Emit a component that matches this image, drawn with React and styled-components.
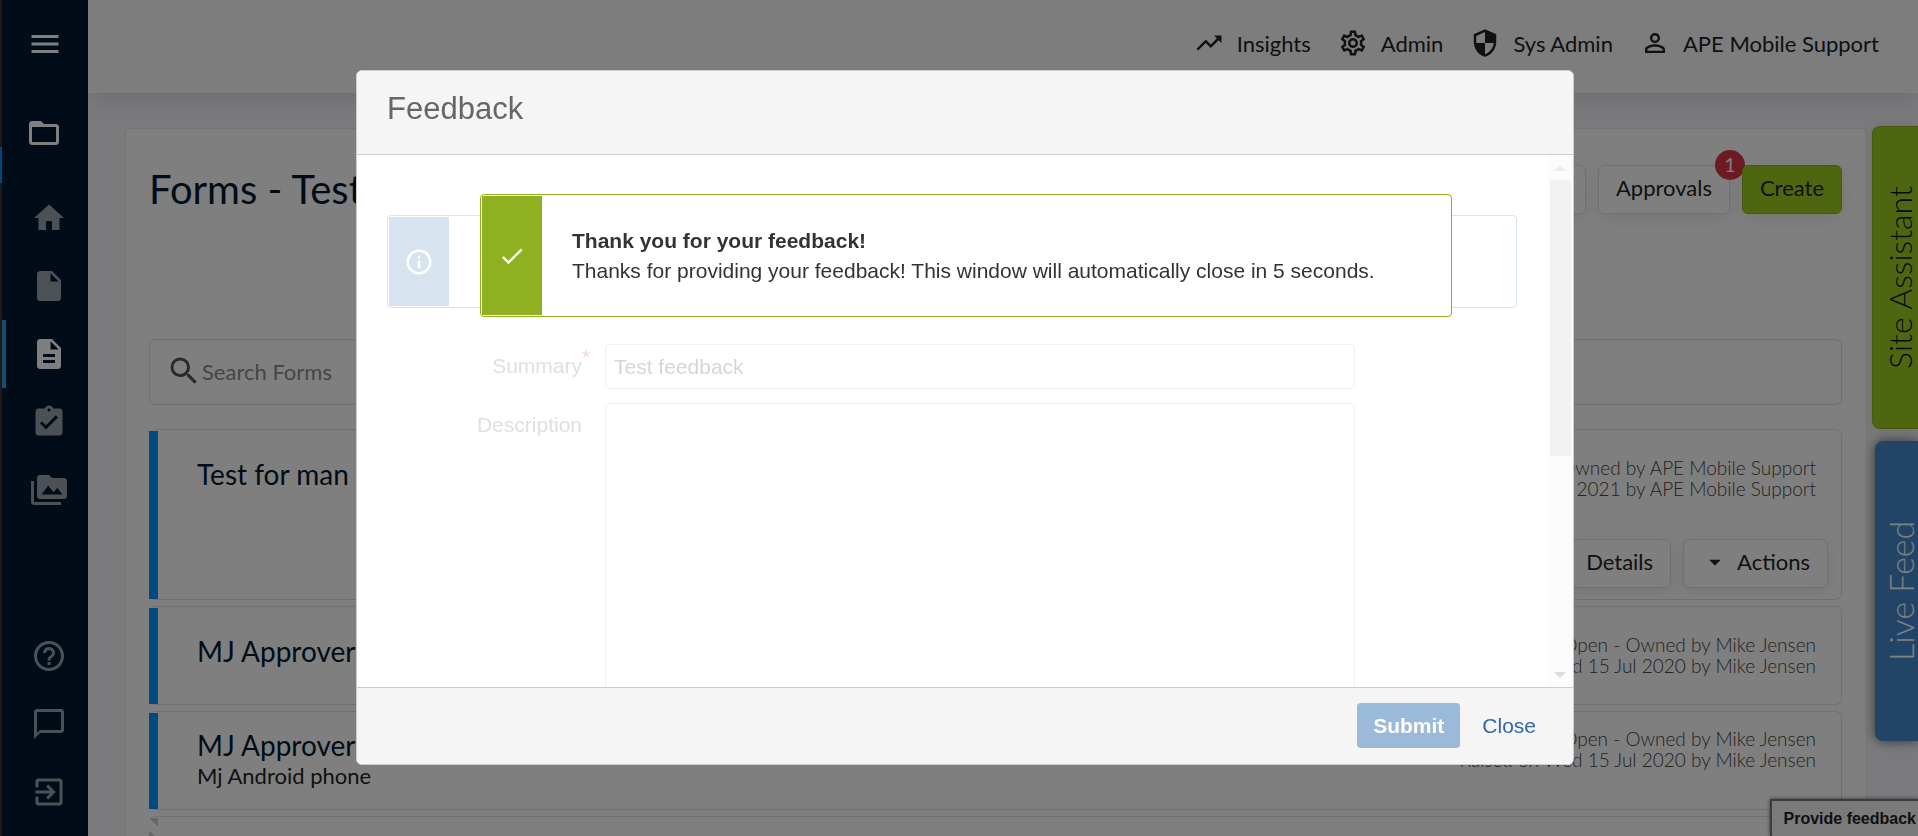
import React from 'react'
import styled, { createGlobalStyle, css } from 'styled-components'
import {
  MdMenu, MdFolderOpen, MdHome, MdInsertDriveFile, MdDescription, MdAssignmentTurnedIn,
  MdPermMedia, MdHelpOutline, MdChatBubbleOutline, MdExitToApp, MdTrendingUp,
  MdOutlineSettings, MdSecurity, MdPersonOutline, MdSearch, MdArrowDropDown,
  MdInfoOutline, MdCheck,
} from 'react-icons/md'

const headerLinks = [
  { label: 'Insights', Icon: MdTrendingUp },
  { label: 'Admin', Icon: MdOutlineSettings },
  { label: 'Sys Admin', Icon: MdSecurity },
  { label: 'APE Mobile Support', Icon: MdPersonOutline },
]

const mainNav = [
  { label: 'Home', Icon: MdHome },
  { label: 'Documents', Icon: MdInsertDriveFile },
  { label: 'Forms', Icon: MdDescription, active: true },
  { label: 'Tasks', Icon: MdAssignmentTurnedIn },
  { label: 'Media', Icon: MdPermMedia },
]

const footerNav = [
  { label: 'Help', Icon: MdHelpOutline },
  { label: 'Chat', Icon: MdChatBubbleOutline },
  { label: 'Log out', Icon: MdExitToApp },
]

const forms = [
  { title: 'Test for man', owner: 'APE Mobile Support', raised: 'Mon 3 May 2021', actions: true },
  { title: 'MJ Approver', owner: 'Mike Jensen', raised: 'Wed 15 Jul 2020' },
  { title: 'MJ Approver', subtitle: 'Mj Android phone', owner: 'Mike Jensen', raised: 'Wed 15 Jul 2020' },
]

function Sidebar() {
  return (
    <SideBar>
      <MenuButton aria-label="Menu"><MdMenu size={36} /></MenuButton>
      <ProjectButton aria-label="Projects"><MdFolderOpen size={36} /></ProjectButton>
      <NavList>
        {mainNav.map(({ label, Icon, active }) => (
          <NavLink key={label} href="#" aria-label={label} $active={active}><Icon size={36} /></NavLink>
        ))}
      </NavList>
      <NavFooter>
        {footerNav.map(({ label, Icon }) => (
          <NavLink key={label} href="#" aria-label={label}><Icon size={36} /></NavLink>
        ))}
      </NavFooter>
    </SideBar>
  )
}

function FormCard({ form }) {
  return (
    <Card $tall={form.actions}>
      <CardStripe />
      <CardContent $compact={Boolean(form.subtitle)}>
        <CardTop>
          <div>
            <CardTitle>{form.title}</CardTitle>
            {form.subtitle && <CardSubtitle>{form.subtitle}</CardSubtitle>}
          </div>
          <CardMeta>
            Open - Owned by {form.owner}<br />
            Raised on {form.raised} by {form.owner}
          </CardMeta>
        </CardTop>
        {form.actions && (
          <CardActions>
            <Button>Details</Button>
            <Button><MdArrowDropDown size={28} />Actions</Button>
          </CardActions>
        )}
      </CardContent>
    </Card>
  )
}

function FeedbackModal() {
  return (
    <Overlay>
      <Modal role="dialog" aria-labelledby="feedback-title">
        <ModalHeader>
          <ModalTitle id="feedback-title">Feedback</ModalTitle>
        </ModalHeader>
        <ModalBody>
          <ModalScroll>
            <InfoMessage>
              <MessageIcon><MdInfoOutline size={30} /></MessageIcon>
            </InfoMessage>
            <FieldRow>
              <FieldLabel htmlFor="summary">Summary<Required>*</Required></FieldLabel>
              <TextInput id="summary" defaultValue="Test feedback" />
            </FieldRow>
            <FieldRow>
              <FieldLabel htmlFor="description">Description</FieldLabel>
              <TextArea id="description" />
            </FieldRow>
          </ModalScroll>
          <ScrollBar>
            <ScrollArrow $up />
            <ScrollThumb />
            <ScrollArrow />
          </ScrollBar>
          <SuccessMessage role="status">
            <MessageIcon $success><MdCheck size={28} /></MessageIcon>
            <MessageText>
              <strong>Thank you for your feedback!</strong>
              <span>Thanks for providing your feedback! This window will automatically close in 5 seconds.</span>
            </MessageText>
          </SuccessMessage>
        </ModalBody>
        <ModalFooter>
          <SubmitButton>Submit</SubmitButton>
          <CloseButton>Close</CloseButton>
        </ModalFooter>
      </Modal>
    </Overlay>
  )
}

function App() {
  return (
    <>
      <GlobalStyle />
      <Page>
        <WindowEdge />
        <Sidebar />
        <Main>
          <Header>
            {headerLinks.map(({ label, Icon }) => (
              <HeaderLink key={label} href="#"><Icon size={30} />{label}</HeaderLink>
            ))}
          </Header>
          <Panel>
            <PanelHeader>
              <PageTitle>Forms - Test</PageTitle>
              <ButtonRow>
                <Button aria-label="More" />
                <Button>Approvals<Badge>1</Badge></Button>
                <Button $primary>Create</Button>
              </ButtonRow>
            </PanelHeader>
            <SearchBox>
              <MdSearch size={36} />
              <SearchInput type="search" aria-label="Search Forms" placeholder="Search Forms" />
            </SearchBox>
            <CardList>
              {forms.map((form, i) => <FormCard key={i} form={form} />)}
              <Card><CardStripe $draft /></Card>
            </CardList>
          </Panel>
        </Main>
        <SideTabs>
          <SideTab>Site Assistant</SideTab>
          <FeedTab>Live Feed</FeedTab>
        </SideTabs>
        <FeedbackTab>Provide feedback</FeedbackTab>
      </Page>
      <FeedbackModal />
    </>
  )
}

export default App

const GlobalStyle = createGlobalStyle`
  * {
    box-sizing: border-box;
  }
  body {
    margin: 0;
    overflow: hidden;
    font-family: Lato, "Open Sans", sans-serif;
    font-size: 22px;
    color: #222;
  }
  button, input, textarea {
    font: inherit;
    color: inherit;
  }
  h1, h2, h3, p {
    margin: 0;
    font-weight: 400;
  }
`
const Page = styled.div`
  display: flex;
  height: 100vh;
  overflow: hidden;
  background: #f4f5fa;
`
const WindowEdge = styled.div`
  width: 2px;
  background: linear-gradient(#38332f 147px, #008cff 147px, #008cff 183px, #38332f 183px);
`

/* sidebar */
const SideBar = styled.nav`
  display: flex;
  flex-direction: column;
  width: 86px;
  flex-shrink: 0;
  background: #001b32;
  color: #fff;
`
const iconButton = css`
  display: flex;
  align-items: center;
  justify-content: center;
  padding: 0;
  border: 0;
  border-bottom: 1px solid #001324;
  background: none;
  color: #fff;
`
const MenuButton = styled.button`
  ${iconButton}
  height: 94px;
  padding-bottom: 6px;
`
const ProjectButton = styled.button`
  ${iconButton}
  height: 79px;
  padding-right: 2px;
`
const NavList = styled.div`
  flex: 1;
  padding-top: 11px;
`
const NavFooter = styled.div`
  padding: 12px 0 10px;
  border-top: 1px solid #001324;
`
const NavLink = styled.a`
  display: flex;
  align-items: center;
  justify-content: center;
  height: 68px;
  padding-left: 4px;
  border-left: 4px solid ${({ $active }) => ($active ? '#2f9ade' : 'transparent')};
  color: ${({ $active }) => ($active ? '#fff' : '#98a3ad')};
`

/* page */
const Main = styled.main`
  display: flex;
  flex-direction: column;
  flex: 1;
  min-width: 0;
`
const Header = styled.header`
  display: flex;
  align-items: center;
  justify-content: flex-end;
  gap: 27px;
  height: 93px;
  flex-shrink: 0;
  padding: 0 39px 7px 0;
  background: #fbfbfd;
  box-shadow: 0 4px 24px rgba(0, 0, 0, 0.12);
`
const HeaderLink = styled.a`
  display: flex;
  align-items: center;
  gap: 13px;
  color: #222;
  text-decoration: none;
`
const Panel = styled.section`
  flex: 1;
  margin: 35px 51px 0 37px;
  padding: 36px 24px 0 23px;
  border: 1px solid #e6e7ec;
  border-bottom: 0;
  border-radius: 6px 6px 0 0;
  background: #fff;
`
const PanelHeader = styled.div`
  display: flex;
  justify-content: space-between;
  align-items: center;
  height: 49px;
`
const PageTitle = styled.h1`
  font-size: 40px;
  line-height: 40px;
  padding-bottom: 2px;
  color: #001b32;
`
const ButtonRow = styled.div`
  display: flex;
  gap: 12px;
`
const Button = styled.button`
  position: relative;
  display: flex;
  align-items: center;
  justify-content: center;
  gap: 8px;
  min-width: 100px;
  height: 49px;
  padding: 0 17px 4px;
  border: 1px solid ${({ $primary }) => ($primary ? '#8cb41c' : '#e0e0e0')};
  border-radius: 6px;
  background: ${({ $primary }) => ($primary ? '#9ecc20' : '#fff')};
  box-shadow: 0 4px 16px rgba(0, 0, 0, 0.08);
`
const Badge = styled.span`
  position: absolute;
  top: -16px;
  right: -16px;
  width: 30px;
  line-height: 30px;
  border-radius: 50%;
  background: #dc3545;
  color: #fff;
  font-size: 19px;
  text-align: center;
`
const SearchBox = styled.div`
  display: flex;
  align-items: center;
  height: 66px;
  margin: 125px 0 24px;
  padding: 0 16px 2px;
  border: 1px solid #e0e0e0;
  border-radius: 6px;
  color: #555;
`
const SearchInput = styled.input`
  flex: 1;
  padding: 0;
  border: 0;
  outline: 0;
  background: none;
  &::placeholder {
    color: #8c8c8c;
  }
`
const CardList = styled.div`
  display: flex;
  flex-direction: column;
  gap: 6px;
`
const Card = styled.article`
  display: flex;
  height: ${({ $tall }) => ($tall ? '171px' : '99px')};
  padding-top: 1px;
  border: 1px solid #e0e0e0;
  border-left: 0;
  border-radius: 6px;
`
const CardStripe = styled.div`
  width: 9px;
  background: ${({ $draft }) =>
    $draft ? 'repeating-linear-gradient(225deg, #ccc 0 6px, #fff 6px 15px, #ccc 15px 17px)' : '#0094ff'};
`
const CardContent = styled.div`
  display: flex;
  flex-direction: column;
  justify-content: space-between;
  flex: 1;
  padding: ${({ $compact }) => ($compact ? '15px' : '26px')} 13px 11px 39px;
`
const CardTop = styled.div`
  display: flex;
  justify-content: space-between;
`
const CardTitle = styled.h3`
  font-size: 28px;
  line-height: 34px;
  color: #001b32;
`
const CardSubtitle = styled.p`
  line-height: 28px;
`
const CardMeta = styled.p`
  padding-right: 12px;
  font-size: 19px;
  font-weight: 300;
  line-height: 21px;
  text-align: right;
  color: #444;
`
const CardActions = styled.div`
  display: flex;
  justify-content: flex-end;
  gap: 12px;
`
const SideTabs = styled.aside`
  position: absolute;
  top: 126px;
  right: 0;
  display: flex;
  flex-direction: column;
  align-items: flex-end;
  gap: 12px;
`
const SideTab = styled.button`
  width: 46px;
  height: 303px;
  padding: 0 8px 0 0;
  border: 1px solid #8cb41c;
  border-left: 0;
  border-radius: 0 8px 8px 0;
  background: #9ecc20;
  color: #111;
  box-shadow: 0 0 12px rgba(0, 0, 0, 0.1);
  font-size: 32px;
  font-weight: 300;
  line-height: 32px;
  writing-mode: vertical-rl;
  transform: rotate(180deg);
`
const FeedTab = styled(SideTab)`
  width: 43px;
  height: 300px;
  border: 0;
  background: #4288ce;
  color: #fff;
  box-shadow: 0 0 12px rgba(0, 0, 0, 0.6);
  font-size: 34px;
  line-height: 34px;
`
const FeedbackTab = styled.button`
  position: absolute;
  right: 0;
  bottom: 0;
  height: 37px;
  padding: 0 2px 0 12px;
  border: 2px solid #777;
  border-width: 2px 0 0 2px;
  background: #f4f4f4;
  box-shadow: 0 0 4px rgba(0, 0, 0, 0.6);
  font: bold 16px "Liberation Sans", Arial, sans-serif;
`

/* feedback dialog */
const Overlay = styled.div`
  position: fixed;
  inset: 0;
  display: flex;
  justify-content: center;
  padding: 70px 0 71px 12px;
  background: rgba(0, 0, 0, 0.5);
  font-family: "Liberation Sans", Arial, sans-serif;
  font-size: 21px;
`
const Modal = styled.div`
  display: flex;
  flex-direction: column;
  width: 90%;
  max-width: 1218px;
  overflow: hidden;
  border: 1px solid #ccc;
  border-radius: 6px;
  background: #fff;
`
const ModalHeader = styled.div`
  height: 84px;
  padding: 20px 30px;
  border-bottom: 1px solid #ccc;
  background: #f5f5f5;
`
const ModalTitle = styled.h2`
  font-size: 31px;
  line-height: 36px;
  color: #666;
`
const ModalBody = styled.div`
  position: relative;
  display: flex;
  flex: 1;
  min-height: 0;
`
const ModalScroll = styled.div`
  flex: 1;
  padding: 60px 30px 0;
  overflow: hidden;
`
const message = css`
  display: flex;
  padding: 1px;
  border: 1px solid;
  border-radius: 4px;
  background: #fff;
`
const InfoMessage = styled.div`
  ${message}
  height: 93px;
  margin-bottom: 36px;
  border-color: #d7e3ef;
`
const SuccessMessage = styled.div`
  ${message}
  position: absolute;
  top: 39px;
  left: 123px;
  right: 121px;
  height: 123px;
  border-color: #8fb021;
`
const MessageIcon = styled.div`
  display: flex;
  align-items: center;
  justify-content: center;
  width: 60px;
  background: ${({ $success }) => ($success ? '#8fb021' : '#d7e3ef')};
  color: #fff;
`
const MessageText = styled.div`
  display: flex;
  flex-direction: column;
  justify-content: center;
  padding-left: 30px;
  line-height: 30px;
  color: #333;
`
const FieldRow = styled.div`
  display: grid;
  grid-template-columns: 195px 1fr;
  gap: 23px;
  margin: 0 162px 14px 0;
`
const FieldLabel = styled.label`
  position: relative;
  padding-top: 9px;
  line-height: 26px;
  text-align: right;
  color: #e0e0e0;
`
const Required = styled.span`
  position: absolute;
  top: 0;
  color: #f9d4d4;
`
const field = css`
  padding: 0 8px;
  border: 1px solid #f0f0f0;
  border-radius: 4px;
  outline: 0;
  color: #d6d6d6;
`
const TextInput = styled.input`
  ${field}
  min-width: 0;
  height: 45px;
`
const TextArea = styled.textarea`
  ${field}
  height: 400px;
  resize: none;
`
const ScrollBar = styled.div`
  display: flex;
  flex-direction: column;
  align-items: center;
  width: 26px;
  padding: 10px 0 9px;
  background: #fcfcfc;
`
const ScrollThumb = styled.div`
  width: 21px;
  height: 276px;
  margin: 9px 0 auto;
  background: #f2f2f2;
`
const ScrollArrow = styled.div`
  border: 6px solid transparent;
  border-width: ${({ $up }) => ($up ? '0 6px 6px' : '6px 6px 0')};
  border-${({ $up }) => ($up ? 'bottom' : 'top')}-color: ${({ $up }) => ($up ? '#ececec' : '#dcdcdc')};
`
const ModalFooter = styled.div`
  display: flex;
  align-items: center;
  justify-content: flex-end;
  gap: 6px;
  height: 77px;
  padding: 0 21px 1px 0;
  border-top: 1px solid #ccc;
  background: #f5f5f5;
`
const SubmitButton = styled.button`
  height: 45px;
  padding: 0 16px;
  border: 0;
  border-radius: 4px;
  background: #9bb9d9;
  color: #fff;
  font-weight: 700;
`
const CloseButton = styled.button`
  height: 45px;
  padding: 0 16px;
  border: 0;
  background: none;
  color: #3068ab;
`
